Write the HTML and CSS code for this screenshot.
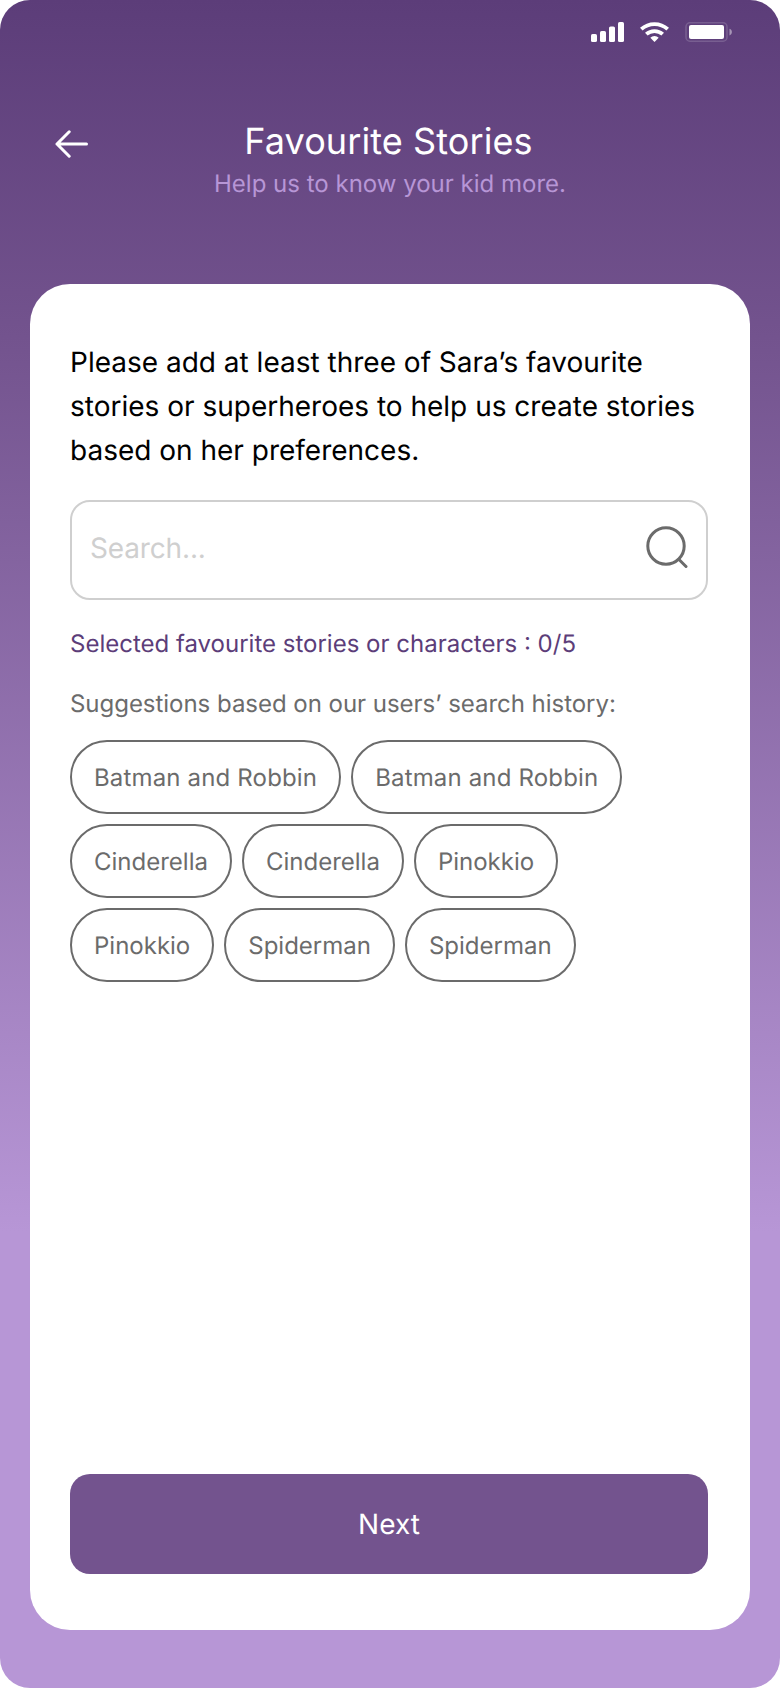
FILE: index.html
```
<!DOCTYPE html>
<html lang="en">
<head>
    <meta charset="UTF-8">
    <meta name="viewport" content="width=device-width, initial-scale=1.0">
    <title>Favourite Stories</title>
    <link rel="stylesheet" href="styles.css">
</head>
<body>
    <div class="screen">
        <div class="status-bar">
            <svg class="signal" width="34" height="20" viewBox="0 0 34 20" fill="#fff">
                <rect x="0" y="12" width="6" height="8" rx="1.6"/>
                <rect x="9" y="9" width="6" height="11" rx="1.6"/>
                <rect x="18" y="4.5" width="6" height="15.5" rx="1.6"/>
                <rect x="27" y="0" width="6" height="20" rx="1.6"/>
            </svg>
            <svg class="wifi" width="30" height="20" viewBox="0 0 30 20" fill="none" stroke="#fff" stroke-width="3.8">
                <path d="M1.3 7.2a19.5 19.5 0 0 1 26.4 0"/>
                <path d="M6.3 12.2a12.2 12.2 0 0 1 16.4 0"/>
                <path d="M14.5 20l-4.2-4.3a6.2 6.2 0 0 1 8.4 0z" fill="#fff" stroke="none"/>
            </svg>
            <svg class="battery" width="48" height="20" viewBox="0 0 48 20">
                <rect x="1" y="0.8" width="41" height="18.4" rx="4" fill="none" stroke="#fff" stroke-opacity="0.16" stroke-width="1.6"/>
                <rect x="4" y="3" width="35" height="14" rx="2" fill="#fff"/>
                <path d="M44.5 6.8c1.6.6 2.4 1.8 2.4 3.3s-.8 2.7-2.4 3.3z" fill="#fff" fill-opacity="0.45"/>
            </svg>
        </div>

        <div class="header">
            <a class="back" href="#" aria-label="Back">
                <svg width="33" height="28" viewBox="0 0 33 28" fill="none" stroke="#fff" stroke-width="3" stroke-linecap="round" stroke-linejoin="round">
                    <path d="M31.5 14H2M14.2 1.8L2 14l12.2 12.2"/>
                </svg>
            </a>
            <div class="titles">
                <h1>Favourite Stories</h1>
                <p>Help us to know your kid more.</p>
            </div>
        </div>

        <div class="card">
            <p class="intro">Please add at least three of Sara’s favourite stories or superheroes to help us create stories based on her preferences.</p>
            <div class="search">
                <input type="text" placeholder="Search...">
                <svg width="42" height="44" viewBox="0 0 42 44" fill="none" stroke="#6b6b6b" stroke-width="3" stroke-linecap="round">
                    <circle cx="20" cy="20" r="18.2"/>
                    <path d="M33 33.5l7 7"/>
                </svg>
            </div>
            <p class="selected">Selected favourite stories or characters : 0/5</p>
            <p class="hint">Suggestions based on our users’ search history:</p>
            <div class="chips">
                <button class="wide">Batman and Robbin</button>
                <button class="wide">Batman and Robbin</button>
                <button>Cinderella</button>
                <button>Cinderella</button>
                <button>Pinokkio</button>
                <button>Pinokkio</button>
                <button>Spiderman</button>
                <button>Spiderman</button>
            </div>
            <button class="next">Next</button>
        </div>
    </div>
</body>
</html>
```
FILE: styles.css
```
* {
    box-sizing: border-box;
}
body {
    margin: 0;
    background-color: #fff;
    font-family: Inter, sans-serif;
    font-weight: 370;
    text-rendering: geometricPrecision;
}
h1, p {
    margin: 0;
    font-weight: inherit;
}
button, input {
    font-family: inherit;
    font-weight: inherit;
    letter-spacing: inherit;
    text-rendering: inherit;
}
.screen {
    display: flex;
    flex-direction: column;
    width: 780px;
    height: 1688px;
    padding: 0 30px 58px;
    border-radius: 30px;
    background: linear-gradient(180deg, #5c3d79 0%, #73538e 20%, #b796d6 73%);
}
.status-bar {
    display: flex;
    justify-content: flex-end;
    height: 64px;
    padding: 22px 17px 0 0;
}
.wifi {
    margin: 0 15px 0 15px;
}
.header {
    display: grid;
    grid-template-columns: 80px 1fr 80px;
    height: 220px;
    padding-top: 55px;
}
.back {
    padding: 11px 0 0 25px;
}
.back svg {
    display: block;
}
.titles {
    text-align: center;
}
.titles h1 {
    padding-right: 3px;
    font-size: 36px;
    letter-spacing: 0.1px;
    line-height: 44px;
    color: #fff;
}
.titles p {
    margin-top: 6px;
    font-size: 24px;
    line-height: 29px;
    color: #b796d6;
}
.card {
    display: flex;
    flex-direction: column;
    flex: 1;
    padding: 56px 42px 56px 40px;
    border-radius: 40px;
    background-color: #fff;
}
.intro {
    font-size: 28px;
    font-weight: 400;
    line-height: 44px;
    color: #000;
}
.search {
    display: flex;
    align-items: center;
    height: 100px;
    margin-top: 28px;
    padding: 0 18px 4px;
    border: 2px solid #cfcfcf;
    border-radius: 20px;
}
.search input {
    flex: 1;
    min-width: 0;
    padding: 0;
    border: none;
    outline: none;
    background: none;
    font-size: 28px;
    letter-spacing: -0.15px;
}
.search input::placeholder {
    color: #cfcfcf;
}
.selected, .hint {
    font-size: 24px;
    line-height: 30px;
}
.selected {
    margin-top: 29px;
    font-weight: 400;
    color: #5c3d79;
}
.hint {
    margin-top: 30px;
    letter-spacing: -0.03px;
    color: #6b6b6b;
}
.chips {
    display: flex;
    flex-wrap: wrap;
    gap: 10px;
    margin-top: 21px;
    padding-right: 60px;
}
.chips button {
    height: 74px;
    padding: 0 22px;
    border: 2px solid #6b6b6b;
    border-radius: 37px;
    background: none;
    font-size: 24px;
    color: #6b6b6b;
}
.chips .wide {
    letter-spacing: 0.16px;
}
.next {
    height: 100px;
    margin-top: auto;
    border: none;
    border-radius: 20px;
    background-color: #73538e;
    font-size: 28px;
    color: #fff;
}
```
